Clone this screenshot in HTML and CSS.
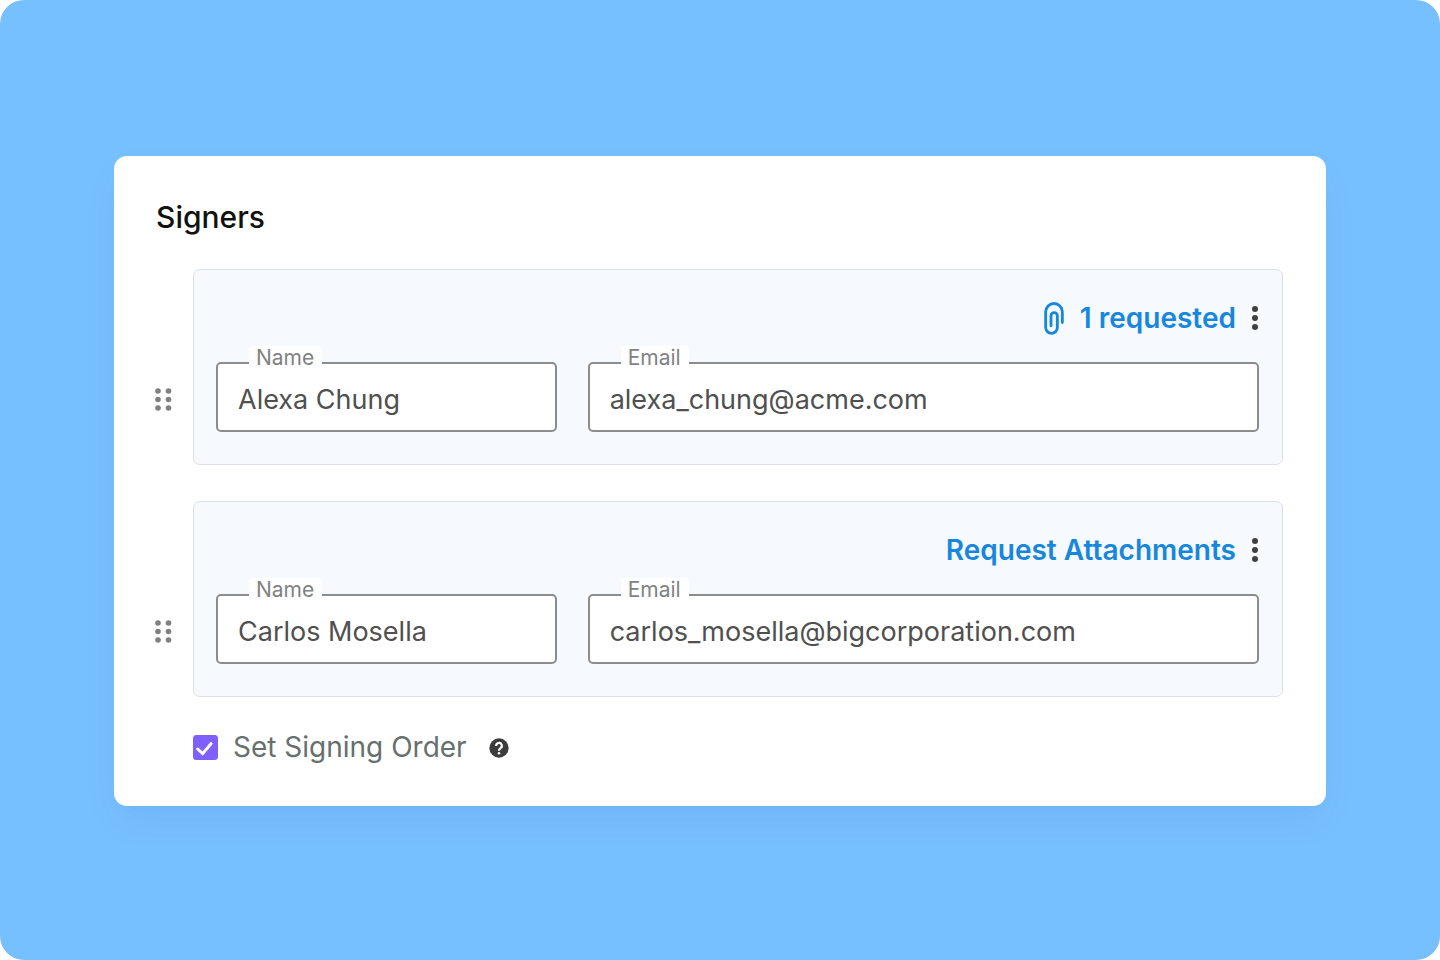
FILE: index.html
```html
<!DOCTYPE html>
<html lang="en">
	<head>
		<meta charset="UTF-8" />
		<meta name="viewport" content="width=device-width, initial-scale=1.0" />
		<title>Signers</title>
		<link rel="stylesheet" href="styles.css">
	</head>
	<body>
		<main class="stage">
			<form class="card">
				<h1 class="card-title">Signers</h1>
				<ul class="signers">
					<li class="signer">
						<button type="button" class="handle" aria-label="Reorder signer">
							<svg width="17" height="23" viewBox="0 0 17 23" fill="currentColor">
								<circle cx="3" cy="3" r="2.8" />
								<circle cx="13.5" cy="3" r="2.8" />
								<circle cx="3" cy="11.5" r="2.8" />
								<circle cx="13.5" cy="11.5" r="2.8" />
								<circle cx="3" cy="20" r="2.8" />
								<circle cx="13.5" cy="20" r="2.8" />
							</svg>
						</button>
						<div class="signer-box">
							<div class="signer-actions">
								<a href="#" class="attach">
									<svg width="20" height="33" viewBox="0 0 60 98" fill="none" stroke="currentColor" stroke-width="8.5" stroke-linecap="round">
										<path d="M55 61V29a25 25 0 0 0-50 0v47a17.5 17.5 0 0 0 35 0V41a9.5 9.5 0 0 0-19 0v30" />
									</svg>
									1 requested
								</a>
								<button type="button" class="more" aria-label="More options">
									<svg width="6" height="26" viewBox="0 0 6 26" fill="currentColor">
										<circle cx="3" cy="4" r="3" />
										<circle cx="3" cy="13" r="3" />
										<circle cx="3" cy="22" r="3" />
									</svg>
								</button>
							</div>
							<div class="fields">
								<div class="field">
									<label for="name1">Name</label>
									<input type="text" id="name1" value="Alexa Chung" />
								</div>
								<div class="field">
									<label for="email1">Email</label>
									<input type="email" id="email1" value="alexa_chung@acme.com" />
								</div>
							</div>
						</div>
					</li>
					<li class="signer">
						<button type="button" class="handle" aria-label="Reorder signer">
							<svg width="17" height="23" viewBox="0 0 17 23" fill="currentColor">
								<circle cx="3" cy="3" r="2.8" />
								<circle cx="13.5" cy="3" r="2.8" />
								<circle cx="3" cy="11.5" r="2.8" />
								<circle cx="13.5" cy="11.5" r="2.8" />
								<circle cx="3" cy="20" r="2.8" />
								<circle cx="13.5" cy="20" r="2.8" />
							</svg>
						</button>
						<div class="signer-box">
							<div class="signer-actions">
								<a href="#" class="attach">Request Attachments</a>
								<button type="button" class="more" aria-label="More options">
									<svg width="6" height="26" viewBox="0 0 6 26" fill="currentColor">
										<circle cx="3" cy="4" r="3" />
										<circle cx="3" cy="13" r="3" />
										<circle cx="3" cy="22" r="3" />
									</svg>
								</button>
							</div>
							<div class="fields">
								<div class="field">
									<label for="name2">Name</label>
									<input type="text" id="name2" value="Carlos Mosella" />
								</div>
								<div class="field">
									<label for="email2">Email</label>
									<input type="email" id="email2" value="carlos_mosella@bigcorporation.com" />
								</div>
							</div>
						</div>
					</li>
				</ul>
				<div class="order">
					<span class="check">
						<input type="checkbox" id="order" checked />
						<svg width="25" height="25" viewBox="0 0 75 75" fill="none" stroke="#fff" stroke-width="9" stroke-linecap="round">
							<path d="M14 42L29 56L54 26" />
						</svg>
					</span>
					<label for="order">Set Signing Order</label>
					<button type="button" class="help" aria-label="Help">
						<svg width="20" height="20" viewBox="0 0 60 60">
							<circle cx="30" cy="30" r="29" fill="#3c3c3c" />
							<path d="M21.5 24a8.5 8.5 0 1 1 13 6.5c-3 2-4.5 3.5-4.5 7.500" fill="none" stroke="#fff" stroke-width="6.5" />
							<circle cx="30" cy="45.5" r="3.8" fill="#fff" />
						</svg>
					</button>
				</div>
			</form>
		</main>
	</body>
</html>
```

FILE: styles.css
```css
* {
	box-sizing: border-box;
}

body {
	margin: 0;
	background: #fff;
	font-family: Inter, 'Liberation Sans', sans-serif;
}

button {
	padding: 0;
	border: none;
	background: none;
	cursor: pointer;
}

svg {
	display: block;
}

.stage {
	display: flex;
	align-items: center;
	min-height: 100vh;
	padding: 42px 114px 40px;
	border-radius: 24px;
	background: #77c0ff;
}

.card {
	flex: 1;
	padding: 41px 43px 42px 42px;
	border-radius: 13px;
	background: #fff;
	box-shadow: 0 16px 36px -8px rgba(60, 80, 140, 0.12);
}

.card-title {
	margin: 0 0 32px;
	color: #111;
	font-size: 30px;
	font-weight: 500;
	line-height: 40px;
}

.signers {
	display: flex;
	flex-direction: column;
	gap: 36px;
	margin: 0;
	padding: 0;
	list-style: none;
}

.signer {
	display: flex;
	align-items: flex-end;
}

.handle {
	width: 17px;
	margin: 0 21px 54px -1px;
	color: #808080;
	cursor: grab;
}

.signer-box {
	flex: 1;
	padding: 32px 23px 32px 22px;
	border: 1px solid #dcdfe6;
	border-radius: 7px;
	background: #f6f9fe;
}

.signer-actions {
	display: flex;
	justify-content: flex-end;
	align-items: center;
	gap: 16px;
	height: 32px;
	margin-bottom: 28px;
	padding-right: 1px;
}

.attach {
	display: flex;
	align-items: center;
	gap: 16px;
	color: #1787de;
	font-size: 28px;
	font-weight: 600;
	line-height: 34px;
	text-decoration: none;
}

.more {
	color: #404040;
}

.fields {
	display: grid;
	grid-template-columns: 34fr 67fr;
	gap: 31px;
}

.field {
	position: relative;
}

/* the label sits over the top border of the input */
.field label {
	position: absolute;
	top: -16px;
	left: 33px;
	padding: 0 8px 0 7px;
	border-radius: 4px;
	background: #fff;
	color: #828282;
	font-size: 21px;
	line-height: 24px;
}

.field input {
	display: block;
	width: 100%;
	height: 70px;
	padding: 4px 20px 0;
	border: 2px solid #8c8c8c;
	border-radius: 5px;
	background: #fff;
	color: #505050;
	font-family: inherit;
	font-size: 27px;
}

.order {
	display: flex;
	align-items: center;
	margin: 33px 0 0 37px;
	color: #66706f;
	font-size: 28px;
	line-height: 34px;
}

.check {
	display: grid;
	margin-right: 15px;
}

.check input {
	grid-area: 1 / 1;
	width: 25px;
	height: 25px;
	margin: 0;
	appearance: none;
	border: 1px solid #7f60fb;
	border-radius: 3px;
}

.check input:checked {
	background: #7f60fb;
}

.check svg {
	grid-area: 1 / 1;
	pointer-events: none;
}

.help {
	margin: 2px 0 0 22px;
}
```
